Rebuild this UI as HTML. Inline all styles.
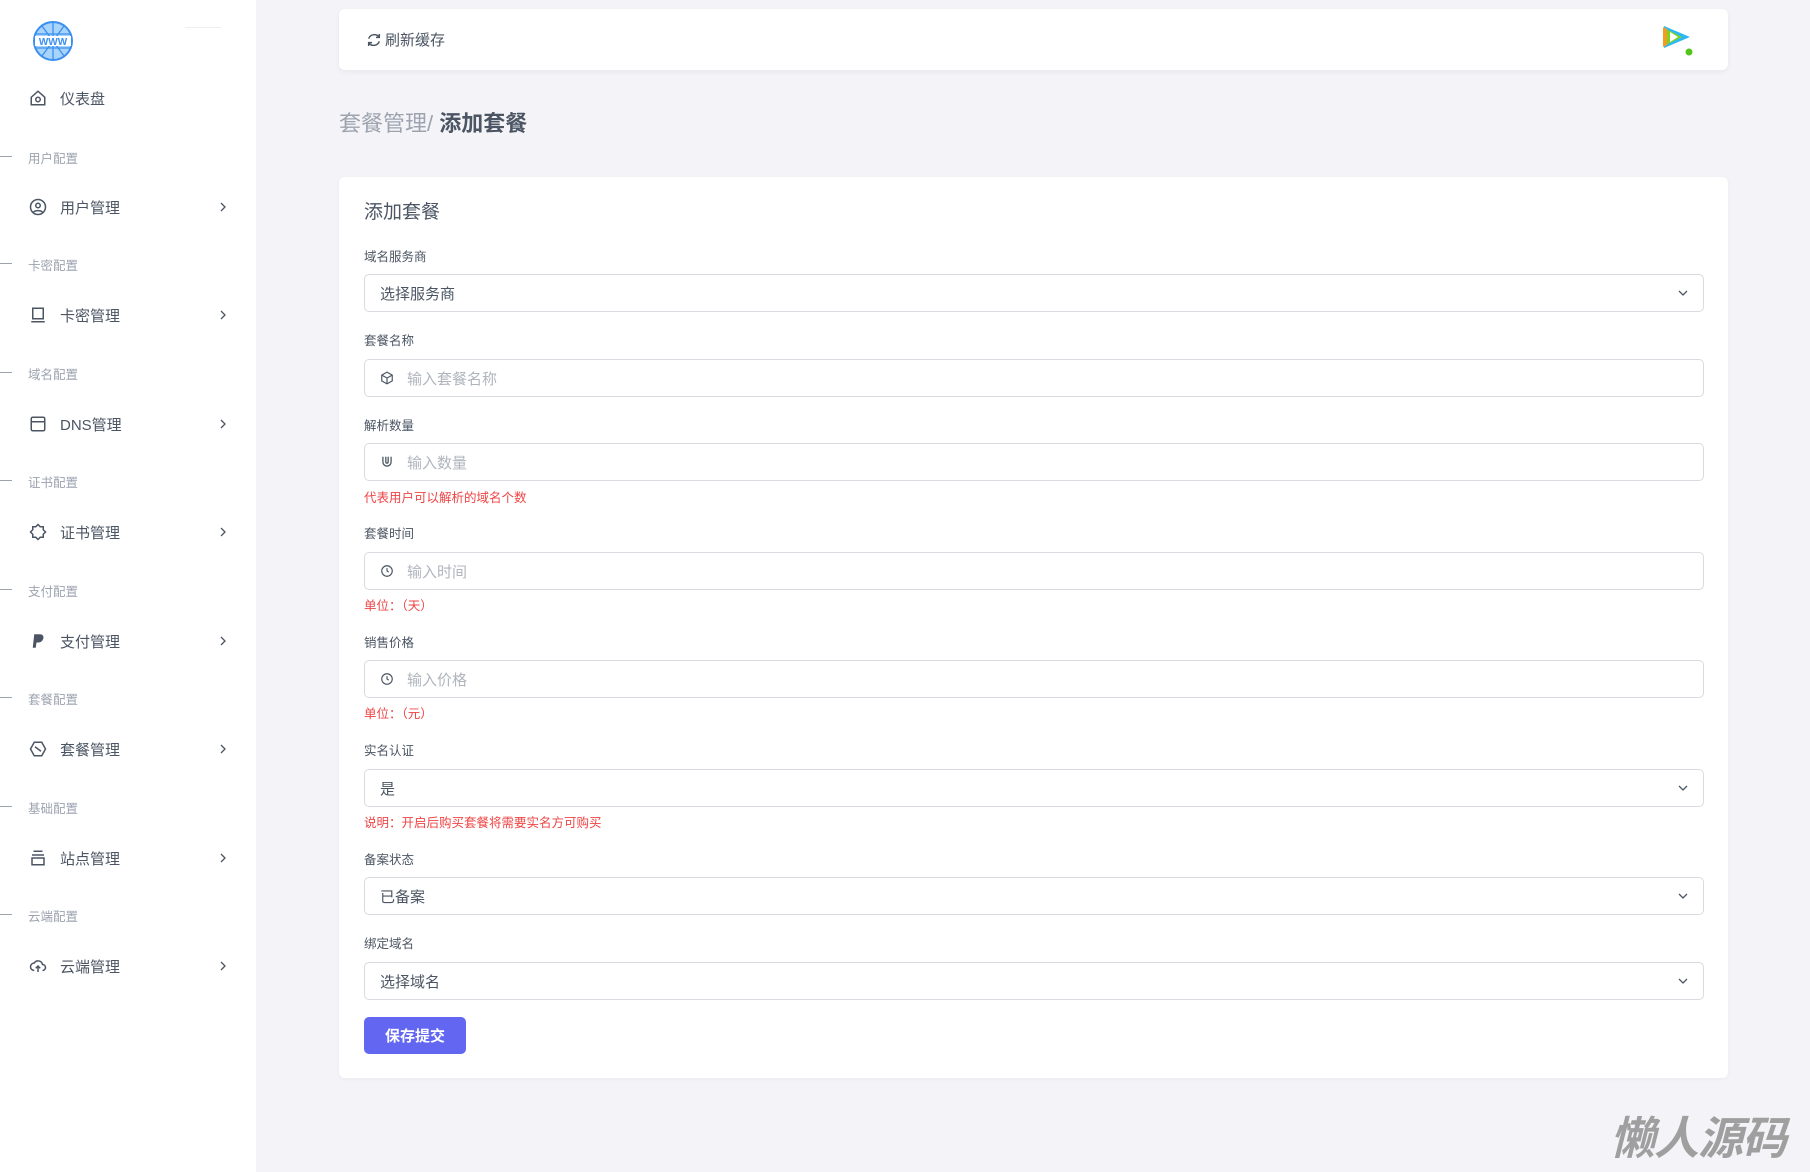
<!DOCTYPE html>
<html><head><meta charset="utf-8"><style>
*{margin:0;padding:0;box-sizing:border-box}
body{width:1810px;height:1172px;background:#f4f4f8;font-family:"Liberation Sans","Noto Sans CJK SC",sans-serif;position:relative;overflow:hidden;color:#4b5563}
.side{position:absolute;left:0;top:0;width:256px;height:1172px;background:#fff}
.mi{position:absolute;left:0;width:256px;height:30px;display:flex;align-items:center;font-size:15px;color:#4b5563}
.mi svg.ic{position:absolute;left:29px;width:18px;height:18px}
.mi span{position:absolute;left:60px}
.mi svg.ch{position:absolute;left:218px;width:10px;height:10px}
.sec{position:absolute;left:28px;font-size:12.5px;color:#9ca3af}
.sec:before{content:"";position:absolute;left:-28px;top:8px;width:12px;height:1px;background:#9ca3af}
.top{position:absolute;left:339px;top:9px;width:1389px;height:61px;background:#fff;border-radius:6px;box-shadow:0 2px 6px rgba(0,0,0,.05)}
.card{position:absolute;left:339px;top:177px;width:1389px;height:901px;background:#fff;border-radius:6px;box-shadow:0 1px 4px rgba(0,0,0,.04)}
.lbl{position:absolute;left:364px;font-size:12.5px;color:#4b5563}
.inp{position:absolute;left:364px;width:1340px;height:38px;border:1px solid #d8dbe0;border-radius:5px;font-size:15px;display:flex;align-items:center}
.inp .t{position:absolute;left:15px;color:#4b5563}
.inp .p{position:absolute;left:42px;color:#b0b5bd}
.inp svg.ic{position:absolute;left:15px;width:14px;height:14px}
.inp svg.dd{position:absolute;right:14px;width:12px;height:12px}
.hint{position:absolute;left:364px;font-size:12.5px;color:#ef4444}
</style></head><body>
<div class="side">
<svg style="position:absolute;left:32px;top:20px" width="42" height="42" viewBox="0 0 42 42"><circle cx="21" cy="21" r="19" fill="#a8d4fb" stroke="#3b8ff0" stroke-width="2"/><path d="M4 14h34M4 28h34M21 2v38M10 6l22 30M32 6L10 36" stroke="#3b8ff0" stroke-width="1.3" fill="none"/><rect x="3" y="16" width="36" height="10" fill="#fff"/><text x="21" y="25" font-size="10" font-weight="bold" fill="#3b8ff0" text-anchor="middle" font-family="Liberation Sans">WWW</text></svg>
<div style="position:absolute;left:185px;top:27px;width:36px;height:1px;background:#eee"></div>
<div class="mi" style="top:83px"><svg class="ic" viewBox="0 0 24 24" fill="none" stroke="#4b5563" stroke-width="2"><path d="M3 11l9-8 9 8v10H3z"/><circle cx="12" cy="14" r="3"/></svg><span>仪表盘</span></div>
<div class="sec" style="top:148px">用户配置</div>
<div class="mi" style="top:192px"><svg class="ic" viewBox="0 0 24 24" fill="none" stroke="#4b5563" stroke-width="2"><circle cx="12" cy="12" r="10"/><circle cx="12" cy="10" r="3"/><path d="M6 19c2-3 10-3 12 0"/></svg><span>用户管理</span><svg class="ch" viewBox="0 0 10 10"><path d="M3 1l4 4-4 4" stroke="#4b5563" fill="none" stroke-width="1.3"/></svg></div>
<div class="sec" style="top:255px">卡密配置</div>
<div class="mi" style="top:300px"><svg class="ic" viewBox="0 0 24 24" fill="none" stroke="#4b5563" stroke-width="2"><rect x="5" y="3" width="14" height="14"/><path d="M3 21h18"/></svg><span>卡密管理</span><svg class="ch" viewBox="0 0 10 10"><path d="M3 1l4 4-4 4" stroke="#4b5563" fill="none" stroke-width="1.3"/></svg></div>
<div class="sec" style="top:364px">域名配置</div>
<div class="mi" style="top:409px"><svg class="ic" viewBox="0 0 24 24" fill="none" stroke="#4b5563" stroke-width="2"><rect x="3" y="3" width="18" height="18" rx="2"/><path d="M3 9h18"/></svg><span>DNS管理</span><svg class="ch" viewBox="0 0 10 10"><path d="M3 1l4 4-4 4" stroke="#4b5563" fill="none" stroke-width="1.3"/></svg></div>
<div class="sec" style="top:472px">证书配置</div>
<div class="mi" style="top:517px"><svg class="ic" viewBox="0 0 24 24" fill="none" stroke="#4b5563" stroke-width="2"><path d="M12 2l3 3h4v4l3 3-3 3v4h-4l-3 3-3-3H5v-4l-3-3 3-3V5h4z"/></svg><span>证书管理</span><svg class="ch" viewBox="0 0 10 10"><path d="M3 1l4 4-4 4" stroke="#4b5563" fill="none" stroke-width="1.3"/></svg></div>
<div class="sec" style="top:581px">支付配置</div>
<div class="mi" style="top:626px"><svg class="ic" viewBox="0 0 24 24" fill="#4b5563"><path d="M7 3h7c4 0 6 2 5 6-1 3-3 5-7 5h-2l-1 7H5z"/></svg><span>支付管理</span><svg class="ch" viewBox="0 0 10 10"><path d="M3 1l4 4-4 4" stroke="#4b5563" fill="none" stroke-width="1.3"/></svg></div>
<div class="sec" style="top:689px">套餐配置</div>
<div class="mi" style="top:734px"><svg class="ic" viewBox="0 0 24 24" fill="none" stroke="#4b5563" stroke-width="2"><path d="M7 3h10l5 9-5 9H7l-5-9z"/><path d="M8 9l8 6"/></svg><span>套餐管理</span><svg class="ch" viewBox="0 0 10 10"><path d="M3 1l4 4-4 4" stroke="#4b5563" fill="none" stroke-width="1.3"/></svg></div>
<div class="sec" style="top:798px">基础配置</div>
<div class="mi" style="top:843px"><svg class="ic" viewBox="0 0 24 24" fill="none" stroke="#4b5563" stroke-width="2"><path d="M6 3h12M4 8h16M4 12h16v9H4z"/></svg><span>站点管理</span><svg class="ch" viewBox="0 0 10 10"><path d="M3 1l4 4-4 4" stroke="#4b5563" fill="none" stroke-width="1.3"/></svg></div>
<div class="sec" style="top:906px">云端配置</div>
<div class="mi" style="top:951px"><svg class="ic" viewBox="0 0 24 24" fill="none" stroke="#4b5563" stroke-width="2"><path d="M7 18a5 5 0 010-10 6 6 0 0111 2 4 4 0 010 8"/><path d="M12 20v-8M9 15l3-3 3 3"/></svg><span>云端管理</span><svg class="ch" viewBox="0 0 10 10"><path d="M3 1l4 4-4 4" stroke="#4b5563" fill="none" stroke-width="1.3"/></svg></div>
</div>

<div class="top">
<svg style="position:absolute;left:27px;top:23px" width="16" height="16" viewBox="0 0 24 24" fill="none" stroke="#4b5563" stroke-width="2.2"><path d="M20 8a9 9 0 00-16 2M4 16a9 9 0 0016-2"/><path d="M20 3v5h-5M4 21v-5h5"/></svg>
<div style="position:absolute;left:46px;top:20px;font-size:15px;color:#4b5563">刷新缓存</div>
<svg style="position:absolute;left:1321px;top:13px" width="34" height="36" viewBox="0 0 34 36"><path d="M4 4l26 11-26 11z" fill="#2db7f5"/><path d="M4 6l18 9-18 9z" fill="#7ed321"/><path d="M3 5v20l4-2V7z" fill="#f59a23"/><path d="M10 10l8 5-8 5z" fill="#fff"/><circle cx="29" cy="30" r="3.5" fill="#52c41a"/></svg>
</div>

<div style="position:absolute;left:339px;top:106px;font-size:22px;color:#9ca3af">套餐管理/ <b style="color:#4b5563">添加套餐</b></div>

<div class="card"></div>
<div style="position:absolute;left:364px;top:197px;font-size:19px;color:#4b5563">添加套餐</div>

<div class="lbl" style="top:246px">域名服务商</div>
<div class="inp" style="top:274px"><span class="t">选择服务商</span><svg class="dd" viewBox="0 0 12 12"><path d="M2 4l4 4 4-4" stroke="#4b5563" fill="none" stroke-width="1.3"/></svg></div>

<div class="lbl" style="top:330px">套餐名称</div>
<div class="inp" style="top:359px"><svg class="ic" viewBox="0 0 24 24" fill="none" stroke="#4b5563" stroke-width="2"><path d="M12 2l9 5v10l-9 5-9-5V7z"/><path d="M3 7l9 5 9-5M12 12v10"/></svg><span class="p">输入套餐名称</span></div>

<div class="lbl" style="top:415px">解析数量</div>
<div class="inp" style="top:443px"><svg class="ic" viewBox="0 0 24 24" fill="none" stroke="#4b5563" stroke-width="2.2"><path d="M5 3v9a7 7 0 0014 0V3M10 3v9a2 2 0 004 0V3"/></svg><span class="p">输入数量</span></div>
<div class="hint" style="top:487px">代表用户可以解析的域名个数</div>

<div class="lbl" style="top:523px">套餐时间</div>
<div class="inp" style="top:552px"><svg class="ic" viewBox="0 0 24 24" fill="none" stroke="#4b5563" stroke-width="2"><circle cx="12" cy="12" r="9"/><path d="M12 7v5l3 2"/></svg><span class="p">输入时间</span></div>
<div class="hint" style="top:595px">单位：（天）</div>

<div class="lbl" style="top:632px">销售价格</div>
<div class="inp" style="top:660px"><svg class="ic" viewBox="0 0 24 24" fill="none" stroke="#4b5563" stroke-width="2"><circle cx="12" cy="12" r="9"/><path d="M12 7v5l3 2"/></svg><span class="p">输入价格</span></div>
<div class="hint" style="top:703px">单位：（元）</div>

<div class="lbl" style="top:740px">实名认证</div>
<div class="inp" style="top:769px"><span class="t">是</span><svg class="dd" viewBox="0 0 12 12"><path d="M2 4l4 4 4-4" stroke="#4b5563" fill="none" stroke-width="1.3"/></svg></div>
<div class="hint" style="top:812px">说明：开启后购买套餐将需要实名方可购买</div>

<div class="lbl" style="top:849px">备案状态</div>
<div class="inp" style="top:877px"><span class="t">已备案</span><svg class="dd" viewBox="0 0 12 12"><path d="M2 4l4 4 4-4" stroke="#4b5563" fill="none" stroke-width="1.3"/></svg></div>

<div class="lbl" style="top:933px">绑定域名</div>
<div class="inp" style="top:962px"><span class="t">选择域名</span><svg class="dd" viewBox="0 0 12 12"><path d="M2 4l4 4 4-4" stroke="#4b5563" fill="none" stroke-width="1.3"/></svg></div>

<div style="position:absolute;left:364px;top:1017px;width:102px;height:37px;background:#6366f1;border-radius:5px;color:#fff;font-size:15px;font-weight:bold;display:flex;align-items:center;justify-content:center">保存提交</div>

<div style="position:absolute;left:1610px;top:1102px;font-size:45px;font-weight:bold;font-style:italic;color:#8a8a8a;opacity:.8;letter-spacing:-1px">懒人源码</div>
</body></html>
